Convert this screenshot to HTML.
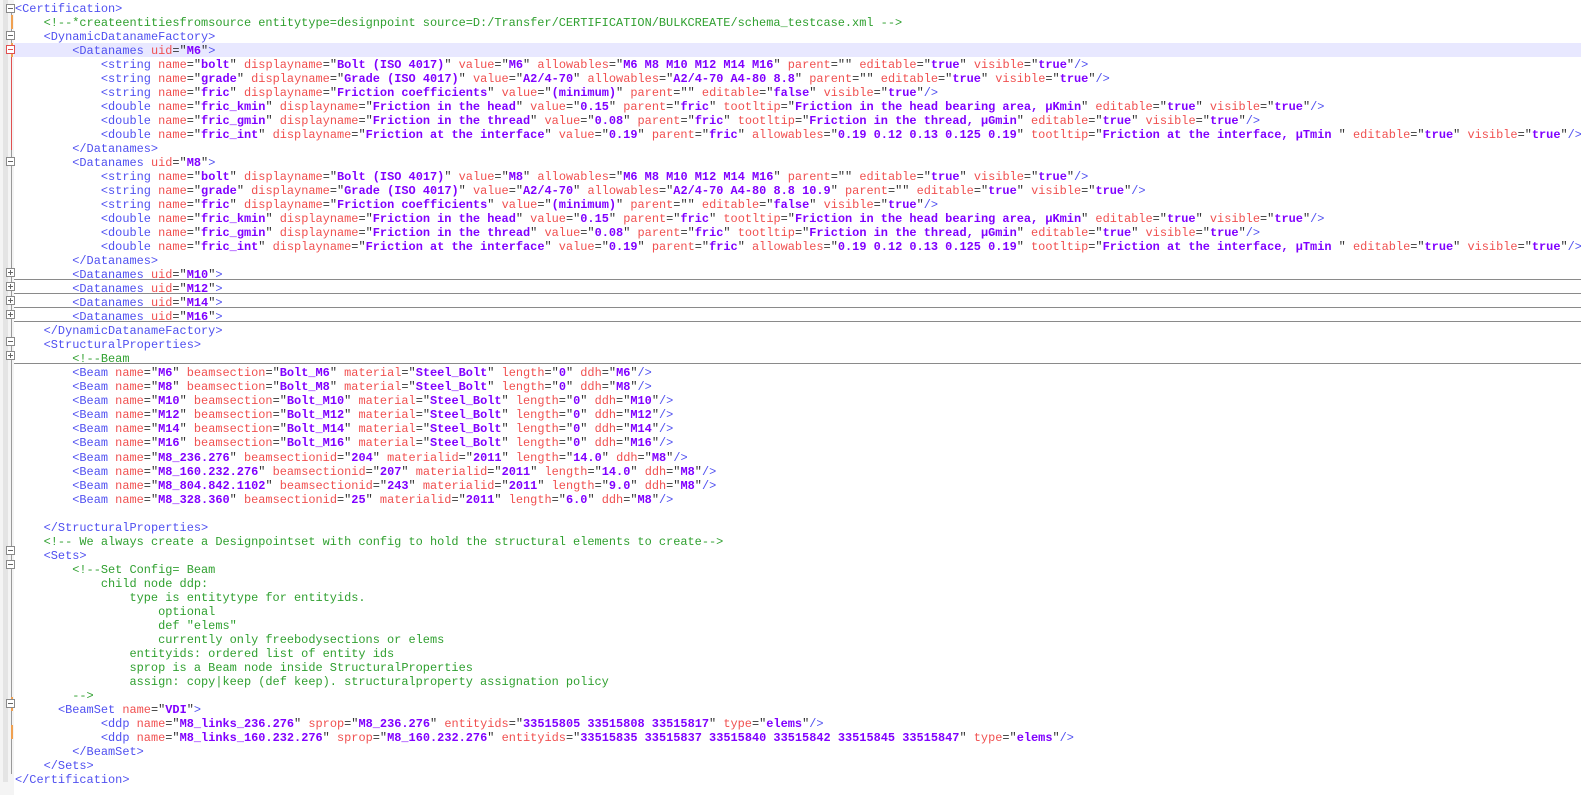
<!DOCTYPE html>
<html><head><meta charset="utf-8"><style>
html,body{margin:0;padding:0;background:#fff;width:1581px;height:795px;overflow:hidden}
#g{position:absolute;left:0;top:0;width:14px;height:795px;background:#f4f4f4}
#g:before{content:"";position:absolute;left:3px;top:0;width:5px;height:782px;background:#e4e4e4}
#fl{position:absolute;left:11px;top:8px;width:1px;height:766px;background:#9a9a9a}
.box{position:absolute;left:6px;width:9px;height:9px;border:1px solid #8a8a8a;background:#fff;box-sizing:border-box}
.box:after{content:"";position:absolute;left:1px;top:3px;width:5px;height:1px;background:#666}
.box.p:before{content:"";position:absolute;left:3px;top:1px;width:1px;height:5px;background:#666}
.box.r{border-color:#e05050}.box.r:after{background:#e05050}
.om{position:absolute;left:11px;width:2px;height:14px;background:#f0a050}
#code{position:absolute;left:15px;top:2px;font-family:"Liberation Mono",monospace;font-size:11.93px;line-height:14.03px;color:#333;white-space:pre}
.l{height:14.03px;position:relative}
.hl{position:absolute;left:0;top:43px;width:1581px;height:14px;background:#e8e8ff}
.hr{position:absolute;left:14px;width:1567px;height:1px;background:#8a8a8a}
t{color:#5050f0}n{color:#f05050}v{color:#8000ff;font-weight:bold}c{color:#30a030}
</style></head><body>
<div class="hl"></div>
<div id="g"></div><div id="fl"></div>
<div style="position:absolute;left:11px;top:54px;width:1px;height:96px;background:#e05050"></div>
<div class="om" style="top:15px"></div><div class="om" style="top:43px"></div><div class="om" style="top:697px"></div><div class="om" style="top:725px"></div>
<div class="box" style="top:4px"></div>
<div class="box" style="top:31px"></div>
<div class="box r" style="top:45px"></div>
<div class="box" style="top:157px"></div>
<div class="box p" style="top:268px"></div>
<div class="box p" style="top:282px"></div>
<div class="box p" style="top:296px"></div>
<div class="box p" style="top:310px"></div>
<div class="box" style="top:337px"></div>
<div class="box p" style="top:351px"></div>
<div class="box" style="top:546px"></div>
<div class="box" style="top:560px"></div>
<div class="box" style="top:699px"></div>
<div class="hr" style="top:279px"></div><div class="hr" style="top:293px"></div><div class="hr" style="top:307px"></div><div class="hr" style="top:321px"></div><div class="hr" style="top:363px"></div>
<div id="code"><div class="l"><t>&lt;Certification&gt;</t></div><div class="l">    <c>&lt;!--*createentitiesfromsource entitytype=designpoint source=D:/Transfer/CERTIFICATION/BULKCREATE/schema_testcase.xml --&gt;</c></div><div class="l">    <t>&lt;DynamicDatanameFactory&gt;</t></div><div class="l">        <t>&lt;Datanames</t> <n>uid</n>="<v>M6</v>"<t>&gt;</t></div><div class="l">            <t>&lt;string</t> <n>name</n>="<v>bolt</v>" <n>displayname</n>="<v>Bolt (ISO 4017)</v>" <n>value</n>="<v>M6</v>" <n>allowables</n>="<v>M6 M8 M10 M12 M14 M16</v>" <n>parent</n>="" <n>editable</n>="<v>true</v>" <n>visible</n>="<v>true</v>"<t>/&gt;</t></div><div class="l">            <t>&lt;string</t> <n>name</n>="<v>grade</v>" <n>displayname</n>="<v>Grade (ISO 4017)</v>" <n>value</n>="<v>A2/4-70</v>" <n>allowables</n>="<v>A2/4-70 A4-80 8.8</v>" <n>parent</n>="" <n>editable</n>="<v>true</v>" <n>visible</n>="<v>true</v>"<t>/&gt;</t></div><div class="l">            <t>&lt;string</t> <n>name</n>="<v>fric</v>" <n>displayname</n>="<v>Friction coefficients</v>" <n>value</n>="<v>(minimum)</v>" <n>parent</n>="" <n>editable</n>="<v>false</v>" <n>visible</n>="<v>true</v>"<t>/&gt;</t></div><div class="l">            <t>&lt;double</t> <n>name</n>="<v>fric_kmin</v>" <n>displayname</n>="<v>Friction in the head</v>" <n>value</n>="<v>0.15</v>" <n>parent</n>="<v>fric</v>" <n>tootltip</n>="<v>Friction in the head bearing area, µKmin</v>" <n>editable</n>="<v>true</v>" <n>visible</n>="<v>true</v>"<t>/&gt;</t></div><div class="l">            <t>&lt;double</t> <n>name</n>="<v>fric_gmin</v>" <n>displayname</n>="<v>Friction in the thread</v>" <n>value</n>="<v>0.08</v>" <n>parent</n>="<v>fric</v>" <n>tootltip</n>="<v>Friction in the thread, µGmin</v>" <n>editable</n>="<v>true</v>" <n>visible</n>="<v>true</v>"<t>/&gt;</t></div><div class="l">            <t>&lt;double</t> <n>name</n>="<v>fric_int</v>" <n>displayname</n>="<v>Friction at the interface</v>" <n>value</n>="<v>0.19</v>" <n>parent</n>="<v>fric</v>" <n>allowables</n>="<v>0.19 0.12 0.13 0.125 0.19</v>" <n>tootltip</n>="<v>Friction at the interface, µTmin </v>" <n>editable</n>="<v>true</v>" <n>visible</n>="<v>true</v>"<t>/&gt;</t></div><div class="l">        <t>&lt;/Datanames&gt;</t></div><div class="l">        <t>&lt;Datanames</t> <n>uid</n>="<v>M8</v>"<t>&gt;</t></div><div class="l">            <t>&lt;string</t> <n>name</n>="<v>bolt</v>" <n>displayname</n>="<v>Bolt (ISO 4017)</v>" <n>value</n>="<v>M8</v>" <n>allowables</n>="<v>M6 M8 M10 M12 M14 M16</v>" <n>parent</n>="" <n>editable</n>="<v>true</v>" <n>visible</n>="<v>true</v>"<t>/&gt;</t></div><div class="l">            <t>&lt;string</t> <n>name</n>="<v>grade</v>" <n>displayname</n>="<v>Grade (ISO 4017)</v>" <n>value</n>="<v>A2/4-70</v>" <n>allowables</n>="<v>A2/4-70 A4-80 8.8 10.9</v>" <n>parent</n>="" <n>editable</n>="<v>true</v>" <n>visible</n>="<v>true</v>"<t>/&gt;</t></div><div class="l">            <t>&lt;string</t> <n>name</n>="<v>fric</v>" <n>displayname</n>="<v>Friction coefficients</v>" <n>value</n>="<v>(minimum)</v>" <n>parent</n>="" <n>editable</n>="<v>false</v>" <n>visible</n>="<v>true</v>"<t>/&gt;</t></div><div class="l">            <t>&lt;double</t> <n>name</n>="<v>fric_kmin</v>" <n>displayname</n>="<v>Friction in the head</v>" <n>value</n>="<v>0.15</v>" <n>parent</n>="<v>fric</v>" <n>tootltip</n>="<v>Friction in the head bearing area, µKmin</v>" <n>editable</n>="<v>true</v>" <n>visible</n>="<v>true</v>"<t>/&gt;</t></div><div class="l">            <t>&lt;double</t> <n>name</n>="<v>fric_gmin</v>" <n>displayname</n>="<v>Friction in the thread</v>" <n>value</n>="<v>0.08</v>" <n>parent</n>="<v>fric</v>" <n>tootltip</n>="<v>Friction in the thread, µGmin</v>" <n>editable</n>="<v>true</v>" <n>visible</n>="<v>true</v>"<t>/&gt;</t></div><div class="l">            <t>&lt;double</t> <n>name</n>="<v>fric_int</v>" <n>displayname</n>="<v>Friction at the interface</v>" <n>value</n>="<v>0.19</v>" <n>parent</n>="<v>fric</v>" <n>allowables</n>="<v>0.19 0.12 0.13 0.125 0.19</v>" <n>tootltip</n>="<v>Friction at the interface, µTmin </v>" <n>editable</n>="<v>true</v>" <n>visible</n>="<v>true</v>"<t>/&gt;</t></div><div class="l">        <t>&lt;/Datanames&gt;</t></div><div class="l">        <t>&lt;Datanames</t> <n>uid</n>="<v>M10</v>"<t>&gt;</t></div><div class="l">        <t>&lt;Datanames</t> <n>uid</n>="<v>M12</v>"<t>&gt;</t></div><div class="l">        <t>&lt;Datanames</t> <n>uid</n>="<v>M14</v>"<t>&gt;</t></div><div class="l">        <t>&lt;Datanames</t> <n>uid</n>="<v>M16</v>"<t>&gt;</t></div><div class="l">    <t>&lt;/DynamicDatanameFactory&gt;</t></div><div class="l">    <t>&lt;StructuralProperties&gt;</t></div><div class="l">        <c>&lt;!--Beam</c></div><div class="l">        <t>&lt;Beam</t> <n>name</n>="<v>M6</v>" <n>beamsection</n>="<v>Bolt_M6</v>" <n>material</n>="<v>Steel_Bolt</v>" <n>length</n>="<v>0</v>" <n>ddh</n>="<v>M6</v>"<t>/&gt;</t></div><div class="l">        <t>&lt;Beam</t> <n>name</n>="<v>M8</v>" <n>beamsection</n>="<v>Bolt_M8</v>" <n>material</n>="<v>Steel_Bolt</v>" <n>length</n>="<v>0</v>" <n>ddh</n>="<v>M8</v>"<t>/&gt;</t></div><div class="l">        <t>&lt;Beam</t> <n>name</n>="<v>M10</v>" <n>beamsection</n>="<v>Bolt_M10</v>" <n>material</n>="<v>Steel_Bolt</v>" <n>length</n>="<v>0</v>" <n>ddh</n>="<v>M10</v>"<t>/&gt;</t></div><div class="l">        <t>&lt;Beam</t> <n>name</n>="<v>M12</v>" <n>beamsection</n>="<v>Bolt_M12</v>" <n>material</n>="<v>Steel_Bolt</v>" <n>length</n>="<v>0</v>" <n>ddh</n>="<v>M12</v>"<t>/&gt;</t></div><div class="l">        <t>&lt;Beam</t> <n>name</n>="<v>M14</v>" <n>beamsection</n>="<v>Bolt_M14</v>" <n>material</n>="<v>Steel_Bolt</v>" <n>length</n>="<v>0</v>" <n>ddh</n>="<v>M14</v>"<t>/&gt;</t></div><div class="l">        <t>&lt;Beam</t> <n>name</n>="<v>M16</v>" <n>beamsection</n>="<v>Bolt_M16</v>" <n>material</n>="<v>Steel_Bolt</v>" <n>length</n>="<v>0</v>" <n>ddh</n>="<v>M16</v>"<t>/&gt;</t></div><div class="l">        <t>&lt;Beam</t> <n>name</n>="<v>M8_236.276</v>" <n>beamsectionid</n>="<v>204</v>" <n>materialid</n>="<v>2011</v>" <n>length</n>="<v>14.0</v>" <n>ddh</n>="<v>M8</v>"<t>/&gt;</t></div><div class="l">        <t>&lt;Beam</t> <n>name</n>="<v>M8_160.232.276</v>" <n>beamsectionid</n>="<v>207</v>" <n>materialid</n>="<v>2011</v>" <n>length</n>="<v>14.0</v>" <n>ddh</n>="<v>M8</v>"<t>/&gt;</t></div><div class="l">        <t>&lt;Beam</t> <n>name</n>="<v>M8_804.842.1102</v>" <n>beamsectionid</n>="<v>243</v>" <n>materialid</n>="<v>2011</v>" <n>length</n>="<v>9.0</v>" <n>ddh</n>="<v>M8</v>"<t>/&gt;</t></div><div class="l">        <t>&lt;Beam</t> <n>name</n>="<v>M8_328.360</v>" <n>beamsectionid</n>="<v>25</v>" <n>materialid</n>="<v>2011</v>" <n>length</n>="<v>6.0</v>" <n>ddh</n>="<v>M8</v>"<t>/&gt;</t></div><div class="l"> </div><div class="l">    <t>&lt;/StructuralProperties&gt;</t></div><div class="l">    <c>&lt;!-- We always create a Designpointset with config to hold the structural elements to create--&gt;</c></div><div class="l">    <t>&lt;Sets&gt;</t></div><div class="l">        <c>&lt;!--Set Config= Beam</c></div><div class="l"><c>            child node ddp:</c></div><div class="l"><c>                type is entitytype for entityids.</c></div><div class="l"><c>                    optional</c></div><div class="l"><c>                    def "elems"</c></div><div class="l"><c>                    currently only freebodysections or elems</c></div><div class="l"><c>                entityids: ordered list of entity ids</c></div><div class="l"><c>                sprop is a Beam node inside StructuralProperties</c></div><div class="l"><c>                assign: copy|keep (def keep). structuralproperty assignation policy</c></div><div class="l">        <c>--&gt;</c></div><div class="l">      <t>&lt;BeamSet</t> <n>name</n>="<v>VDI</v>"<t>&gt;</t></div><div class="l">            <t>&lt;ddp</t> <n>name</n>="<v>M8_links_236.276</v>" <n>sprop</n>="<v>M8_236.276</v>" <n>entityids</n>="<v>33515805 33515808 33515817</v>" <n>type</n>="<v>elems</v>"<t>/&gt;</t></div><div class="l">            <t>&lt;ddp</t> <n>name</n>="<v>M8_links_160.232.276</v>" <n>sprop</n>="<v>M8_160.232.276</v>" <n>entityids</n>="<v>33515835 33515837 33515840 33515842 33515845 33515847</v>" <n>type</n>="<v>elems</v>"<t>/&gt;</t></div><div class="l">        <t>&lt;/BeamSet&gt;</t></div><div class="l">    <t>&lt;/Sets&gt;</t></div><div class="l"><t>&lt;/Certification&gt;</t></div></div>
</body></html>
